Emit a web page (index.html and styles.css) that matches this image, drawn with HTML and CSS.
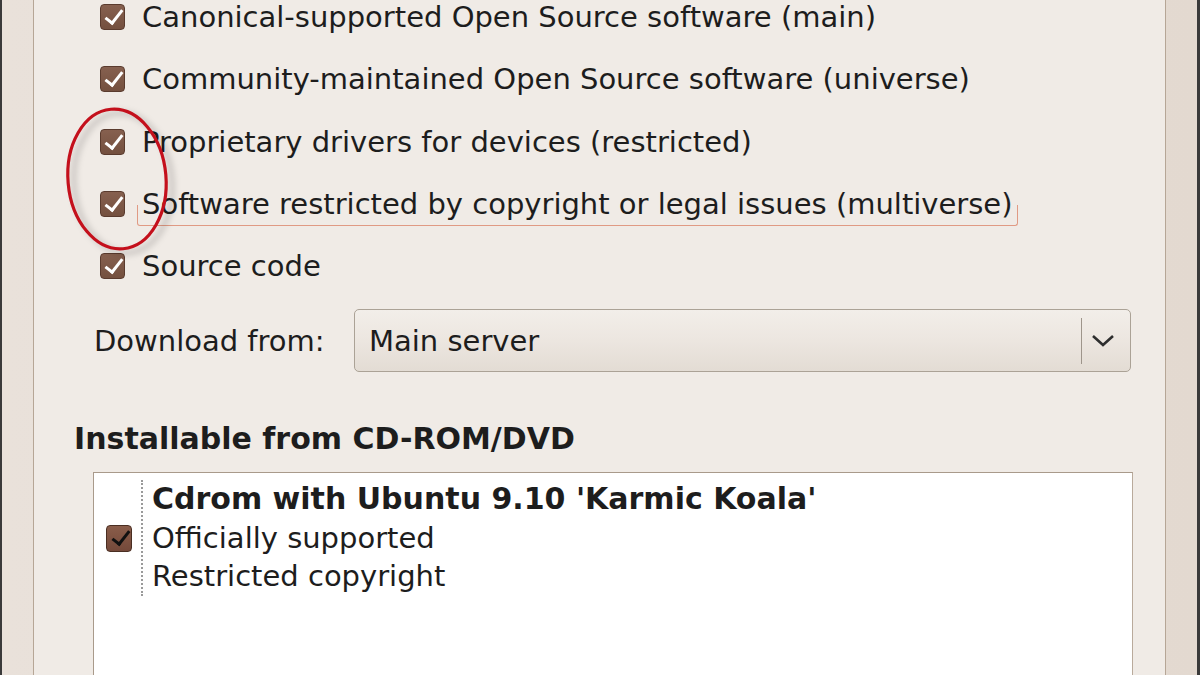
FILE: index.html
```html
<!DOCTYPE html>
<html lang="en">
<head>
    <meta charset="UTF-8">
    <meta name="viewport" content="width=device-width, initial-scale=1.0">
    <title>Software Sources</title>
    <link rel="stylesheet" href="styles.css">
</head>
<body>
    <div class="window">
        <div class="pane">
            <div class="sources">
                <div class="row"><span class="check"></span><span class="label">Canonical-supported Open Source software (main)</span></div>
                <div class="row"><span class="check"></span><span class="label">Community-maintained Open Source software (universe)</span></div>
                <div class="row"><span class="check"></span><span class="label">Proprietary drivers for devices (restricted)</span></div>
                <div class="row"><span class="check"></span><span class="label focus">Software restricted by copyright or legal issues (multiverse)</span></div>
                <div class="row"><span class="check"></span><span class="label">Source code</span></div>
            </div>

            <div class="download">
                <span class="dl-label">Download from:</span>
                <div class="combo">
                    <span class="combo-text">Main server</span>
                    <span class="combo-sep"></span>
                    <svg class="combo-arrow" width="24" height="14" viewBox="0 0 24 14">
                        <path d="M2 2 L12 11 L22 2" fill="none" stroke="#2e2e2e" stroke-width="2.6"/>
                    </svg>
                </div>
            </div>

            <h2 class="section">Installable from CD-ROM/DVD</h2>

            <div class="listbox">
                <div class="cd-item">
                    <span class="check dark"></span>
                    <div class="cd-text">
                        <b>Cdrom with Ubuntu 9.10 'Karmic Koala'</b>
                        <span>Officially supported</span>
                        <span>Restricted copyright</span>
                    </div>
                </div>
            </div>
        </div>
    </div>

    <!-- red marker drawn over the screenshot -->
    <svg class="marker" width="140" height="180" viewBox="0 0 140 180">
        <ellipse cx="60" cy="85" rx="49" ry="70" transform="rotate(-5 60 85)" fill="none" stroke="#c4101c" stroke-width="3.2"/>
    </svg>
</body>
</html>
```

FILE: styles.css
```css
body{
    margin: 0;
    background-color: #3a3a3a;
    font-family: "DejaVu Sans", Verdana, sans-serif;
    color: #1d1d1d;
    overflow: hidden;
}
.window{
    margin: 0 3px 0 2px;
    height: 675px;
    padding: 0 31px;
    background: linear-gradient(90deg, #e9e1da, #e3d9d0);
}
.pane{
    height: 100%;
    overflow: hidden;
    background-color: #f0ebe6;
    border-left: 1px solid #b6a696;
    border-right: 1px solid #b6a696;
    padding: 0 34px 0 0;
}
.sources{
    margin-top: -14px;
    padding-left: 66px;
}
.row{
    height: 62.3px;
    display: flex;
    align-items: center;
    gap: 17px;
}
.check{
    position: relative;
    width: 23px;
    height: 24px;
    flex: none;
    border: 1px solid #5a3b2e;
    border-radius: 4px;
    background: linear-gradient(#86604f, #74503f);
}
.check::after{
    content: "";
    position: absolute;
    left: 8px;
    top: 1px;
    width: 7px;
    height: 15px;
    border-right: 3.5px solid #fff;
    border-bottom: 3.5px solid #fff;
    transform: rotate(38deg);
}
.check.dark{
    width: 24px;
    height: 25px;
    background: linear-gradient(#8a5d4a, #74493a);
    border-color: #4a2e22;
}
.check.dark::after{
    border-color: #111;
    left: 9px;
}
.label{
    font-size: 29px;
    position: relative;
}
.focus::after{
    content: "";
    position: absolute;
    left: -5px;
    right: -5px;
    bottom: -5px;
    height: 20px;
    border: 1px solid #e09a84;
    border-top: none;
    border-radius: 0 0 3px 3px;
}
.download{
    display: flex;
    align-items: center;
    margin-top: 12px;
    padding-left: 60px;
}
.dl-label{
    font-size: 29px;
    width: 260px;
}
.combo{
    flex: 1;
    height: 61px;
    display: flex;
    align-items: center;
    border: 1px solid #aba296;
    border-radius: 5px;
    background: linear-gradient(#f2eee9, #ede7e1 45%, #e3dcd4);
    padding-left: 14px;
}
.combo-text{
    font-size: 29px;
    flex: 1;
}
.combo-sep{
    width: 1px;
    height: 46px;
    background-color: #9e958b;
    margin-right: 9px;
}
.combo-arrow{
    margin-right: 15px;
}
.section{
    margin: 50px 0 0 40px;
    font-size: 30px;
    font-weight: bold;
    line-height: 34px;
}
.listbox{
    margin: 16px -2px 0 59px;
    height: 260px;
    background-color: #fff;
    border: 1px solid #a99a8b;
    border-right-color: #b9aa9b;
}
.cd-item{
    display: flex;
    align-items: center;
    padding: 7px 0 0 12px;
}
.cd-text{
    display: flex;
    flex-direction: column;
    font-size: 29px;
    line-height: 38.5px;
    border-left: 2px dotted #9a9a9a;
    margin-left: 9px;
    padding-left: 9px;
}
.cd-text b{
    font-size: 30px;
}
.marker{
    position: absolute;
    left: 57px;
    top: 94px;
    filter: drop-shadow(6px 4px 3px rgba(0, 0, 0, 0.25));
}
```
